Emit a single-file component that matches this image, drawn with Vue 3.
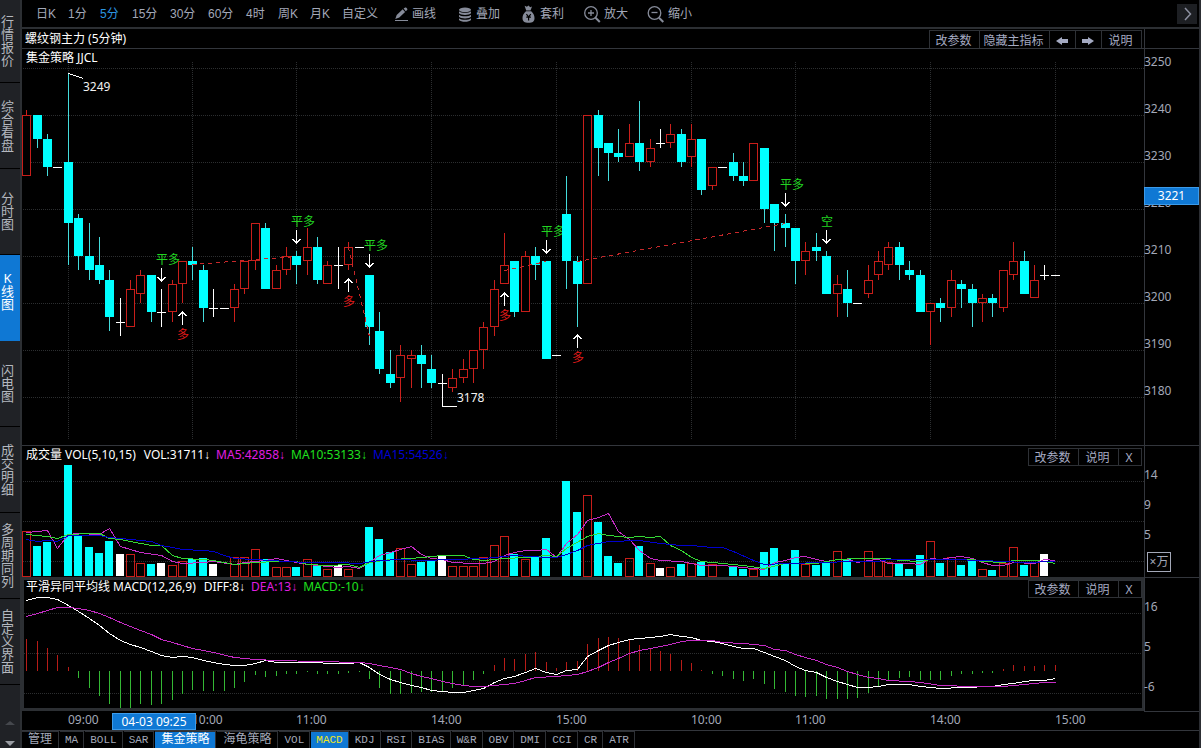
<script setup>
import { computed, onBeforeUnmount, onMounted, ref } from 'vue'

const sideItems = ['行情报价', '综合看盘', '分时图', 'K线图', '闪电图', '成交明细', '多周期同列', '自定义界面']
const periods = ['日K', '1分', '5分', '15分', '30分', '60分', '4时', '周K', '月K', '自定义']
const indicatorTabs = [
  '管理', 'MA', 'BOLL', 'SAR', '集金策略', '海龟策略', 'VOL', 'MACD', 'KDJ', 'RSI',
  'BIAS', 'W&R', 'OBV', 'DMI', 'CCI', 'CR', 'ATR'
]
const activeSide = ref('K线图')
const activePeriod = ref('5分')
const isCjk = (s) => s.charCodeAt(0) > 255

const plotEl = ref(null)
const plotWidth = ref(1122)
let observer
onMounted(() => {
  const measure = () => { plotWidth.value = plotEl.value.clientWidth }
  measure()
  observer = new ResizeObserver(measure)
  observer.observe(plotEl.value)
})
onBeforeUnmount(() => observer && observer.disconnect())

const step = computed(() => (plotWidth.value - 93.5) / 99)
const px = (i) => Math.floor(4.7 + i * step.value)
const py = (p) => Math.round(19 + (3250 - p) * 4.7)

// open, close, high, low
const bars = [
  [3227, 3240, 3241, 3227], [3240, 3235, 3240, 3233], [3235, 3229, 3236, 3227], [3229, 3229, 3229, 3229],
  [3230, 3217, 3249, 3208], [3218, 3210, 3219, 3207], [3210, 3207, 3217, 3205], [3208, 3205, 3214, 3204],
  [3205, 3197, 3207, 3194], [3196, 3196, 3201, 3193], [3195, 3203, 3205, 3195], [3202, 3206, 3207, 3200],
  [3206, 3198, 3206, 3196], [3198, 3198, 3203, 3195], [3198, 3204, 3205, 3196], [3204, 3209, 3209, 3200],
  [3209, 3208, 3212, 3205], [3207, 3199, 3208, 3196], [3199, 3199, 3203, 3197], [3199, 3199, 3199, 3199],
  [3199, 3203, 3204, 3196], [3203, 3209, 3209, 3202], [3209, 3217, 3217, 3207], [3216, 3203, 3217, 3203],
  [3203, 3207, 3208, 3203], [3207, 3210, 3212, 3206], [3210, 3208, 3211, 3204], [3209, 3212, 3216, 3206],
  [3212, 3205, 3214, 3204], [3204, 3208, 3209, 3204], [3208, 3208, 3212, 3203], [3208, 3212, 3213, 3207],
  [3212, 3212, 3212, 3212], [3206, 3195, 3206, 3191], [3194, 3186, 3198, 3185], [3185, 3183, 3190, 3182],
  [3184, 3189, 3191, 3179], [3188, 3189, 3190, 3182], [3189, 3187, 3191, 3182], [3186, 3183, 3189, 3182],
  [3183, 3183, 3185, 3178], [3182, 3184, 3186, 3181], [3184, 3186, 3188, 3183], [3186, 3190, 3190, 3183],
  [3190, 3195, 3196, 3186], [3195, 3203, 3205, 3193], [3204, 3208, 3215, 3204], [3209, 3198, 3209, 3197],
  [3198, 3210, 3211, 3198], [3210, 3208, 3212, 3205], [3209, 3188, 3209, 3188], [3189, 3189, 3189, 3189],
  [3219, 3209, 3227, 3203], [3209, 3204, 3210, 3195], [3204, 3240, 3240, 3204], [3240, 3233, 3241, 3227],
  [3234, 3232, 3234, 3226], [3232, 3231, 3237, 3230], [3231, 3234, 3238, 3231], [3234, 3230, 3243, 3228],
  [3230, 3233, 3235, 3229], [3234, 3234, 3237, 3233], [3234, 3236, 3238, 3233], [3236, 3230, 3237, 3229],
  [3231, 3235, 3238, 3229], [3235, 3224, 3235, 3223], [3225, 3229, 3229, 3224], [3229, 3229, 3229, 3229],
  [3230, 3227, 3232, 3226], [3227, 3226, 3230, 3225], [3226, 3234, 3234, 3226], [3233, 3220, 3233, 3217],
  [3221, 3217, 3221, 3211], [3217, 3216, 3219, 3212], [3216, 3209, 3216, 3204], [3209, 3211, 3213, 3206],
  [3212, 3211, 3215, 3209], [3210, 3202, 3211, 3202], [3202, 3204, 3206, 3197], [3203, 3200, 3207, 3197],
  [3200, 3200, 3200, 3200], [3202, 3205, 3208, 3201], [3206, 3209, 3211, 3205], [3208, 3212, 3213, 3207],
  [3212, 3208, 3213, 3205], [3207, 3206, 3209, 3205], [3206, 3198, 3207, 3198], [3198, 3200, 3200, 3191],
  [3200, 3199, 3201, 3196], [3199, 3205, 3207, 3197], [3204, 3203, 3205, 3199], [3203, 3200, 3204, 3195],
  [3200, 3201, 3202, 3196], [3201, 3200, 3202, 3197], [3199, 3207, 3207, 3198], [3206, 3209, 3213, 3205],
  [3209, 3202, 3211, 3202], [3201, 3205, 3208, 3201], [3206, 3206, 3208, 3205], [3206, 3206, 3206, 3206]
]
const kind = (b) => (b[1] > b[0] ? 'up' : b[1] < b[0] ? 'down' : 'flat')

const candles = computed(() => bars.map((b, i) => {
  const top = py(Math.max(b[0], b[1]))
  const bottom = py(Math.min(b[0], b[1]))
  return { i, kind: kind(b), x: px(i), top, h: bottom - top, bottom, hi: py(b[2]), lo: py(b[3]) }
}))

const volumes = [
  45, 30, 34, 0, 111, 40, 29, 23, 35, 22, 22, 13, 12, 13, 11, 15, 17, 18, 12, 0,
  19, 19, 27, 17, 9, 9, 9, 17, 11, 7, 11, 7, 0, 49, 37, 24, 28, 12, 14, 15,
  20, 10, 10, 10, 19, 31, 40, 22, 17, 19, 38, 0, 95, 64, 81, 54, 20, 13, 18, 30,
  13, 8, 9, 12, 13, 14, 12, 0, 10, 7, 7, 24, 28, 12, 26, 12, 11, 14, 25, 17,
  0, 25, 15, 14, 13, 7, 21, 35, 13, 19, 11, 15, 7, 6, 13, 29, 11, 14, 22, 0
]
const volBars = computed(() => volumes.map((h, i) => ({ i, h, x: px(i), kind: kind(bars[i]) })).filter((v) => v.h))

const macd = [
  32, 30, 23, 16, 4, -7, -17, -25, -33, -37, -37, -33, -34, -33, -29, -23, -19, -20, -20, -20,
  -17, -11, -4, -6, -5, -3, -3, -1, -3, -3, -3, -2, -1, -8, -17, -23, -23, -22, -21, -21,
  -20, -17, -14, -9, -3, 6, 13, 12, 17, 19, 9, 3, 9, 10, 27, 33, 34, 33, 31, 26,
  23, 20, 17, 11, 8, 1, -3, -5, -8, -10, -8, -13, -18, -21, -25, -26, -25, -28, -28, -28,
  -27, -22, -15, -10, -7, -6, -9, -9, -9, -5, -3, -3, -2, -2, 2, 6, 5, 5, 6, 6
]
const macdBars = computed(() => macd.map((v, i) => ({ i, x: px(i), y: v > 0 ? 94 - v : 94, h: Math.abs(v), cls: v > 0 ? 'pos' : 'neg' })))

// [bar index, height on the panel]
const ma5 = [
  [0, 86], [1, 85], [2, 84], [3, 102], [4, 88], [5, 87], [7, 88], [8, 82], [9, 100], [11, 106], [13, 109], [14, 115],
  [15, 117], [17, 116], [18, 115], [20, 118], [21, 116], [23, 114], [24, 112], [26, 116], [27, 118], [30, 121], [31, 120],
  [32, 122], [33, 116], [34, 109], [35, 106], [36, 103], [37, 100], [38, 108], [39, 112], [40, 113], [41, 116], [43, 117],
  [44, 117], [45, 115], [46, 109], [47, 106], [48, 104], [49, 104], [50, 103], [51, 111], [52, 97], [53, 88], [54, 74],
  [55, 71], [56, 67], [57, 85], [58, 93], [59, 104], [60, 112], [61, 114], [63, 115], [65, 119], [67, 119], [70, 122],
  [71, 123], [72, 116], [73, 114], [74, 111], [75, 110], [76, 113], [77, 115], [78, 113], [79, 113], [80, 116], [81, 114],
  [82, 113], [83, 117], [85, 117], [86, 118], [87, 112], [88, 113], [89, 111], [90, 110], [91, 112], [92, 116], [93, 119],
  [94, 119], [95, 116], [97, 117], [98, 113], [99, 114]
]
const ma10 = [
  [0, 88], [2, 90], [3, 92], [4, 88], [6, 87], [7, 87], [8, 92], [9, 93], [10, 95], [12, 99], [13, 99], [14, 109], [15, 112],
  [17, 113], [18, 114], [20, 118], [22, 116], [24, 115], [26, 115], [27, 118], [29, 119], [31, 118], [32, 121], [33, 116],
  [35, 113], [37, 112], [38, 111], [40, 109], [42, 109], [43, 113], [44, 114], [46, 112], [48, 111], [50, 109], [51, 110],
  [52, 102], [54, 90], [55, 87], [56, 89], [58, 91], [59, 90], [60, 91], [61, 90], [62, 99], [63, 104], [64, 111], [65, 115],
  [66, 116], [67, 117], [69, 119], [71, 122], [73, 117], [76, 117], [78, 113], [80, 112], [83, 112], [84, 114], [86, 115],
  [87, 113], [91, 113], [92, 115], [94, 116], [95, 114], [97, 114], [98, 115], [99, 117]
]
const ma15 = [
  [0, 93], [1, 95], [2, 94], [3, 95], [4, 89], [7, 89], [8, 91], [9, 92], [12, 95], [13, 99], [14, 101], [15, 103], [17, 104],
  [18, 105], [19, 109], [20, 112], [22, 113], [25, 115], [27, 116], [30, 116], [32, 117], [34, 114], [36, 113], [38, 114],
  [41, 113], [44, 112], [46, 110], [47, 109], [50, 111], [51, 111], [52, 108], [53, 104], [54, 99], [56, 95], [59, 94],
  [61, 97], [63, 99], [64, 99], [66, 101], [67, 101], [68, 105], [70, 114], [71, 118], [73, 117], [77, 116], [79, 115],
  [82, 115], [83, 113], [89, 113], [92, 114], [96, 116], [99, 115]
]
const diff = [
  [0, 23], [1, 20], [2, 20], [3, 22], [4, 28], [5, 34], [6, 41], [7, 48], [8, 56], [9, 63], [10, 67], [11, 70], [12, 74],
  [13, 78], [14, 80], [15, 79], [16, 80], [17, 83], [18, 85], [19, 87], [20, 88], [21, 88], [22, 86], [23, 83], [24, 85],
  [28, 85], [29, 86], [31, 86], [32, 85], [33, 90], [34, 97], [35, 102], [36, 105], [37, 108], [38, 110], [39, 113],
  [40, 114], [41, 115], [42, 115], [43, 113], [44, 111], [45, 105], [46, 101], [47, 99], [48, 95], [49, 91], [50, 95],
  [51, 97], [52, 93], [53, 92], [54, 79], [55, 73], [56, 68], [57, 65], [58, 62], [59, 61], [60, 60], [61, 59], [62, 57],
  [63, 59], [64, 60], [65, 63], [66, 64], [67, 66], [68, 69], [69, 71], [70, 71], [71, 75], [72, 79], [73, 83], [74, 89],
  [75, 93], [76, 95], [77, 100], [78, 104], [79, 107], [80, 110], [81, 110], [82, 109], [83, 107], [85, 107], [86, 109],
  [88, 111], [90, 110], [91, 110], [92, 109], [93, 109], [94, 107], [95, 106], [96, 104], [97, 103], [98, 103], [99, 101]
]
const dea = [
  [0, 39], [1, 36], [2, 33], [3, 30], [4, 30], [5, 31], [6, 33], [7, 36], [8, 40], [9, 45], [10, 49], [11, 53], [12, 57],
  [13, 62], [14, 65], [15, 68], [16, 71], [17, 73], [18, 75], [20, 80], [21, 81], [22, 82], [24, 83], [28, 84], [32, 85],
  [33, 86], [34, 88], [35, 90], [36, 92], [37, 96], [38, 99], [39, 101], [40, 104], [41, 106], [42, 108], [43, 109],
  [44, 109], [46, 107], [47, 106], [48, 103], [49, 100], [51, 99], [52, 98], [53, 97], [54, 94], [55, 90], [56, 85],
  [57, 81], [58, 76], [59, 73], [60, 71], [61, 69], [62, 67], [63, 64], [64, 63], [66, 63], [67, 65], [69, 66], [70, 67],
  [71, 68], [72, 72], [73, 73], [74, 77], [75, 80], [76, 83], [77, 87], [78, 90], [79, 94], [80, 97], [81, 100], [82, 101],
  [83, 103], [85, 104], [86, 105], [88, 108], [91, 109], [94, 109], [95, 108], [97, 106], [98, 105], [99, 105]
]
const poly = (pts) => pts.map(([i, y]) => `${px(i) + 0.5},${y + 0.5}`).join(' ')

const timeMarks = [
  { i: 4, t: '09:00' }, { i: 16, t: '10:00' }, { i: 26, t: '11:00' }, { i: 39, t: '14:00' }, { i: 51, t: '15:00' },
  { i: 64, t: '10:00' }, { i: 74, t: '11:00' }, { i: 87, t: '14:00' }, { i: 99, t: '15:00' }
]
const prices = [3250, 3240, 3230, 3220, 3210, 3200, 3190, 3180]
const volLabels = [{ t: '14', y: 29 }, { t: '9', y: 59 }, { t: '5', y: 89 }]
const macdLabels = [{ t: '16', y: 30 }, { t: '5', y: 70 }, { t: '-6', y: 110 }]

const sells = [
  { i: 13, y: 219, t: '平多' }, { i: 26, y: 181, t: '平多' }, { i: 33, y: 205, t: '平多' },
  { i: 50, y: 191, t: '平多' }, { i: 73, y: 144, t: '平多' }, { i: 77, y: 181, t: '空' }
]
const buys = [{ i: 15, y: 262 }, { i: 31, y: 229 }, { i: 46, y: 243 }, { i: 53, y: 285 }]
const trades = [
  { a: 16, ya: 215, b: 26, yb: 207 }, { a: 31, ya: 198, b: 33, yb: 287 },
  { a: 46, ya: 221, b: 50, yb: 212 }, { a: 53, ya: 212, b: 73, yb: 174 }
]
</script>

<template>
  <div class="app">
    <nav class="side" aria-label="视图">
      <button
        v-for="s in sideItems" :key="s" type="button"
        :class="['side-item', { active: s === activeSide }]" @click="activeSide = s"
      ><span>{{ s }}</span></button>
      <div class="side-scroll">
        <button type="button" aria-label="向上"><svg width="10" height="4"><path d="M0 4L5 0L10 4Z" fill="#45484d" /></svg></button>
        <button type="button" aria-label="向下"><svg width="10" height="5"><path d="M0 0L5 5L10 0Z" fill="#9a9da3" /></svg></button>
      </div>
    </nav>

    <main class="main">
      <header class="toolbar">
        <button
          v-for="p in periods" :key="p" type="button"
          :class="['period', { wide: p.length === 3, active: p === activePeriod }]" @click="activePeriod = p"
        >{{ p }}</button>
        <button type="button" class="tool">
          <svg width="20" height="20" viewBox="0 0 20 20"><path d="M12.6 4.4l1.6-.9a1 1 0 0 1 1.2.3l.8 1a1 1 0 0 1-.1 1.3l-1.3 1.2zM11.700 5.200l2.400 2.800-5.800 5.400-4 1.600 1.400-4z" fill="#868b99" /><path d="M4 16.500H17" stroke="#868b99" /></svg>画线
        </button>
        <button type="button" class="tool">
          <svg width="20" height="20" viewBox="0 0 20 20" fill="#868b99"><ellipse cx="10" cy="5.800" rx="6" ry="2.300" /><path d="M4 7.300c2 2 10 2 12 0v2c-2 2.200-10 2.200-12 0zM4 10.800c2 2 10 2 12 0v2c-2 2.200-10 2.200-12 0zM4 14.300c2 2 10 2 12 0v1.600c-2 2.400-10 2.400-12 0z" /></svg>叠加
        </button>
        <button type="button" class="tool">
          <svg width="20" height="20" viewBox="0 0 20 20"><path d="M5.600 1.800l2.300 1 1.600-1.200 1.700 1.600 1.800-.6-1.500 4h-4.300zM7 7.300h5.200c2 1.800 3.300 4 3.300 6.600c0 3.300-1.800 4.900-5.900 4.900s-6.100-1.600-6.100-4.900c0-2.600 1.400-4.800 3.500-6.600z" fill="#868b99" /><path d="M7.400 10.200l2.200 2.600 2.200-2.600M7.300 13.200h4.600M9.600 12.800v3.600" fill="none" stroke="#000" stroke-width="1.200" /></svg>套利
        </button>
        <button type="button" class="tool">
          <svg width="20" height="20" viewBox="0 0 20 20" fill="none" stroke="#868b99" stroke-width="1.300"><circle cx="8" cy="9" r="6.300" /><path d="M5 9h6M8 6v6" /><path d="M12.500 13.700l4.300 4.300" stroke-width="2" /></svg>放大
        </button>
        <button type="button" class="tool">
          <svg width="20" height="20" viewBox="0 0 20 20" fill="none" stroke="#868b99" stroke-width="1.300"><circle cx="7.500" cy="9" r="6.300" /><path d="M4.500 8.500h6" /><path d="M12 13.700l4.300 4.300" stroke-width="2" /></svg>缩小
        </button>
        <button type="button" class="more" aria-label="更多">
          <svg width="20" height="20"><path d="M8 4l5.500 6L8 16" fill="none" stroke="#8c90a0" stroke-width="1.500" /></svg>
        </button>
      </header>

      <div class="row title-row">
        <div class="title">
          <h1>螺纹钢主力 (5分钟)</h1>
          <div class="actions">
            <button type="button" class="w50">改参数</button>
            <button type="button" class="w70">隐藏主指标</button>
            <button type="button" class="w26" aria-label="上一个"><svg width="12" height="8"><path d="M0 4L6 0V2H12V6H6V8Z" fill="#a4aac2" /></svg></button>
            <button type="button" class="w26" aria-label="下一个"><svg width="12" height="8"><path d="M12 4L6 0V2H0V6H6V8Z" fill="#a4aac2" /></svg></button>
            <button type="button" class="w40">说明</button>
          </div>
        </div>
        <div class="axis"></div>
      </div>

      <section class="row price-row">
        <div ref="plotEl" class="plot">
          <svg class="chart" width="100%" height="396">
            <g class="grid">
              <line v-for="p in prices" :key="p" x1="1" x2="100%" :y1="py(p) + 0.5" :y2="py(p) + 0.5" />
              <line v-for="m in timeMarks" :key="m.i" :x1="px(m.i) + 0.5" :x2="px(m.i) + 0.5" y1="13" y2="391" />
            </g>
            <g v-for="s in sells" :key="'s' + s.i">
              <text class="sell" :x="px(s.i) - 5" :y="s.y - 4">{{ s.t }}</text>
              <path class="arrow" :d="`M${px(s.i) + 0.5} ${s.y}v13m-4 -4l4 4l4 -4`" />
            </g>
            <g v-for="b in buys" :key="'b' + b.i">
              <text class="buy" :x="px(b.i) - 5" :y="b.y + 28">多</text>
              <path class="arrow" :d="`M${px(b.i) + 0.5} ${b.y + 14}v-13m-4 4l4 -4l4 4`" />
            </g>
            <g v-for="c in candles" :key="c.i" :class="c.kind">
              <template v-if="c.kind === 'flat'">
                <rect :x="c.x - 4" :y="c.top" width="9" height="1" />
                <rect v-if="c.lo > c.hi" :x="c.x" :y="c.hi" width="1" :height="c.lo - c.hi" />
              </template>
              <template v-else-if="c.kind === 'down'">
                <rect class="wick" :x="c.x" :y="c.hi" width="1" :height="c.lo - c.hi" />
                <rect :x="c.x - 4" :y="c.top" width="9" :height="c.h" />
              </template>
              <template v-else>
                <rect class="wick" :x="c.x" :y="c.hi" width="1" :height="c.top - c.hi" />
                <rect class="wick" :x="c.x" :y="c.bottom" width="1" :height="c.lo - c.bottom" />
                <rect class="hollow" :x="c.x - 3.5" :y="c.top + 0.5" width="8" :height="c.h - 1" />
              </template>
            </g>
            <line
              v-for="t in trades" :key="'t' + t.a" class="trade"
              :x1="px(t.a) + 0.5" :y1="t.ya + 0.5" :x2="px(t.b) + 0.5" :y2="t.yb + 0.5"
            />
            <path class="callout" :d="`M${px(4) + 0.5} 24.5l15 5`" />
            <text class="note" :x="px(4) + 15" y="42">3249</text>
            <path class="callout" :d="`M${px(40) + 0.5} 350v7.500h14`" />
            <text class="note" :x="px(40) + 15" y="353">3178</text>
          </svg>
          <div class="legend"><span>集金策略 JJCL</span></div>
        </div>
        <div class="axis">
          <span v-for="p in prices" :key="p" class="tick" :style="{ top: py(p) - 14 + 'px' }">{{ p }}</span>
          <span class="price-tag">3221</span>
        </div>
      </section>

      <section class="row vol-row">
        <div class="plot">
          <svg class="chart" width="100%" height="131">
            <g class="grid"><line v-for="y in [35, 75, 115]" :key="y" x1="1" x2="100%" :y1="y + 0.5" :y2="y + 0.5" /></g>
            <g v-for="v in volBars" :key="v.i" :class="v.kind">
              <rect v-if="v.kind === 'up'" class="hollow" :x="v.x - 3.5" :y="130.5 - v.h" width="8" :height="v.h" />
              <rect v-else :x="v.x - 4" :y="130 - v.h" width="8" :height="v.h" />
            </g>
            <polyline class="line magenta" :points="poly(ma5)" />
            <polyline class="line green" :points="poly(ma10)" />
            <polyline class="line blue" :points="poly(ma15)" />
          </svg>
          <div class="legend">
            <span class="name">成交量 VOL(5,10,15)</span>
            <span>VOL:31711<i>↓</i></span>
            <span class="t-magenta">MA5:42858<i>↓</i></span>
            <span class="t-green">MA10:53133<i>↓</i></span>
            <span class="t-blue">MA15:54526<i>↓</i></span>
          </div>
          <div class="actions floating">
            <button type="button" class="w50">改参数</button>
            <button type="button" class="w40">说明</button>
            <button type="button" class="w23">X</button>
          </div>
        </div>
        <div class="axis">
          <span v-for="l in volLabels" :key="l.t" class="tick" :style="{ top: l.y - 8 + 'px' }">{{ l.t }}</span>
          <span class="unit">×万</span>
        </div>
      </section>

      <section class="row macd-row">
        <div class="plot selected">
          <svg class="chart" width="100%" height="134">
            <g class="grid"><line v-for="y in [36, 76, 116]" :key="y" x1="2" x2="100%" :y1="y + 0.5" :y2="y + 0.5" /></g>
            <rect v-for="m in macdBars" :key="m.i" :class="m.cls" :x="m.x" :y="m.y" width="1" :height="m.h" />
            <polyline class="line white" :points="poly(diff)" />
            <polyline class="line magenta" :points="poly(dea)" />
          </svg>
          <div class="legend">
            <span class="name">平滑异同平均线 MACD(12,26,9)</span>
            <span>DIFF:8<i>↓</i></span>
            <span class="t-magenta">DEA:13<i>↓</i></span>
            <span class="t-green">MACD:-10<i>↓</i></span>
          </div>
          <div class="actions floating">
            <button type="button" class="w50">改参数</button>
            <button type="button" class="w40">说明</button>
            <button type="button" class="w23">X</button>
          </div>
        </div>
        <div class="axis">
          <span v-for="l in macdLabels" :key="l.t" class="tick" :style="{ top: l.y - 9 + 'px' }">{{ l.t }}</span>
        </div>
      </section>

      <div class="time-row">
        <span v-for="m in timeMarks" :key="m.i" class="time" :style="{ left: px(m.i) + 'px' }">{{ m.t }}</span>
        <span class="time-tag" :style="{ left: px(4) + 44 + 'px' }">04-03 09:25</span>
        <div class="time-corner"></div>
      </div>

      <nav class="tabs" aria-label="指标">
        <button
          v-for="t in indicatorTabs" :key="t" type="button"
          :class="['tab', { cjk: isCjk(t), picked: t === '集金策略', current: t === 'MACD' }]"
        >{{ t }}</button>
      </nav>
    </main>
  </div>
</template>

<style>
body {
  background: #000;
}
</style>

<style scoped>
.app {
  display: flex;
  min-height: 100vh;
  box-sizing: border-box;
  border-right: 2px solid #2c2e33;
  background: #000;
  color: #a3a8b8;
  font: 12px/16px "Noto Sans", "Noto Sans CJK SC", sans-serif;
}
button {
  margin: 0;
  padding: 0;
  border: 0;
  border-radius: 0;
  background: none;
  color: inherit;
  font: inherit;
  box-sizing: border-box;
  cursor: pointer;
}
svg {
  display: block;
}

.side {
  flex: none;
  width: 22px;
  box-sizing: border-box;
  border-right: 2px solid #2c2f33;
  background: #202226;
  display: flex;
  flex-direction: column;
}
.side-item {
  height: 86px;
  width: 20px;
  padding-left: 1px;
  display: flex;
  align-items: center;
  border-bottom: 1px solid #000;
  color: #b4b8bf;
  font-size: 13px;
  line-height: 13px;
}
.side-item:first-child {
  height: 83px;
}
.side-item span {
  width: 13px;
  text-align: center;
  word-break: break-all;
}
.side-item.active {
  padding-bottom: 12px;
  border-bottom-color: #0f78d4;
  background: #0f78d4;
  color: #fff;
}
.side-scroll {
  margin-top: auto;
  height: 30px;
  padding-left: 5px;
  display: flex;
  flex-direction: column;
  justify-content: space-between;
}
.side-scroll button {
  width: 10px;
  height: 10px;
}

.main {
  flex: 1;
  min-width: 0;
  display: flex;
  flex-direction: column;
}
.toolbar {
  height: 29px;
  box-sizing: border-box;
  border-bottom: 2px solid #2c2f33;
  display: flex;
  align-items: center;
  padding: 0 2px 0 14px;
  font-family: "Liberation Sans", "Noto Sans CJK SC", sans-serif;
  white-space: nowrap;
}
.period {
  width: 32px;
  text-align: left;
}
.period.wide {
  width: 38px;
}
.period:nth-child(10) {
  width: 49px;
}
.period.active {
  color: #2c95e0;
}
.tool {
  width: 64px;
  display: flex;
  align-items: center;
  gap: 1px;
}
.more {
  margin-left: auto;
  width: 20px;
  height: 20px;
  background: #1d1f23;
}

.row {
  display: flex;
}
.axis {
  position: relative;
  flex: none;
  width: 55px;
  box-sizing: border-box;
  border-left: 1px solid #33363c;
}
.title-row {
  height: 20px;
  box-sizing: border-box;
  border-bottom: 1px solid #33363c;
}
.title {
  flex: 1;
  display: flex;
  justify-content: space-between;
  align-items: flex-end;
  padding: 0 2px 0 3px;
}
h1 {
  margin: 0;
  color: #fff;
  font-size: 12px;
  font-weight: 400;
  line-height: 18px;
}
.actions {
  display: flex;
  height: 18px;
  border-left: 1px solid #2e3136;
  color: #a4aac2;
}
.actions button {
  display: flex;
  align-items: center;
  justify-content: center;
  padding: 2px 2px 0 0;
  border: 1px solid #2e3136;
  border-left: 0;
  background: #000;
  white-space: nowrap;
  line-height: 14px;
}
.title .actions button {
  border-bottom: 0;
}
.w50 { width: 50px; }
.w70 { width: 70px; }
.w40 { width: 40px; }
.w26 { width: 26px; }
.w23 { width: 23px; }
.actions.floating {
  position: absolute;
  right: 2px;
  top: 2px;
}

.plot {
  position: relative;
  flex: 1;
  min-width: 0;
}
.price-row {
  border-bottom: 1px solid #33363c;
}
.selected::after {
  content: "";
  position: absolute;
  inset: 0;
  border: solid #2c2f33;
  border-width: 3px 2px 3px 2px;
  pointer-events: none;
}
.macd-row .axis {
  border-top: 1px solid #33363c;
}
.legend {
  position: absolute;
  left: 4px;
  top: 1px;
  display: flex;
  gap: 6px;
  color: #fff;
  white-space: nowrap;
}
.legend .name {
  margin-right: 2px;
}
.legend i {
  font-family: "Liberation Sans", sans-serif;
  font-style: normal;
}
.macd-row .legend {
  top: 2px;
}
.macd-row .actions.floating {
  top: 3px;
}
.t-magenta { color: #e01ee0; }
.t-green { color: #1fe01f; }
.t-blue { color: #0000d4; }

.chart {
  shape-rendering: crispEdges;
}
.grid line {
  stroke: #2c2e30;
  stroke-dasharray: 1 1;
}
.down { fill: #00ffff; }
.down .wick { fill: #44dcdc; }
.up { fill: #cc201c; }
.hollow {
  fill: #000;
  stroke: #c81e1a;
}
.vol-row .hollow { fill: none; }
.flat { fill: #fff; }
.trade {
  stroke: #c8282a;
  stroke-dasharray: 4 4;
}
.arrow,
.callout {
  fill: none;
  stroke: #fff;
}
.sell { fill: #22d422; }
.buy { fill: #e01a1a; }
.note { fill: #f2f2f2; }
.line { fill: none; }
.magenta { stroke: #c62cc6; }
.green { stroke: #35d835; }
.blue { stroke: #0000cd; }
.white { stroke: #fff; }
.pos { fill: #b81c18; }
.neg { fill: #34b834; }

.tick {
  position: absolute;
  left: -1px;
}
.price-tag {
  position: absolute;
  left: -1px;
  right: 0;
  top: 138px;
  height: 18px;
  box-sizing: border-box;
  border: 1px solid #3c9bea;
  background: #0f78d4;
  color: #fff;
  text-align: center;
}
.unit {
  position: absolute;
  left: 2px;
  top: 106px;
  width: 24px;
  height: 20px;
  box-sizing: border-box;
  border: 1px solid #a3a8b8;
  line-height: 18px;
  text-align: center;
}
.time-row {
  position: relative;
  height: 20px;
  box-sizing: border-box;
  border-bottom: 1px solid #33363c;
  display: flex;
  justify-content: flex-end;
}
.time-corner {
  width: 55px;
  border-top: 1px solid #33363c;
}
.time {
  position: absolute;
  top: 1px;
}
.time-tag {
  position: absolute;
  top: 2px;
  width: 84px;
  height: 17px;
  box-sizing: border-box;
  border: 1px solid #3c9bea;
  background: #0f78d4;
  color: #fff;
  text-align: center;
}
.tabs {
  display: flex;
  gap: 1px;
  height: 17px;
  overflow: hidden;
}
.tab {
  padding: 0 5px;
  border: solid #2e3136;
  border-width: 1px 1px 0 0;
  font: 11px/16px "Liberation Mono", "Noto Sans CJK SC", monospace;
}
.tab.cjk {
  padding: 0 6px;
  font-size: 12px;
}
.tab.picked {
  background: #0f78d4;
  color: #fff;
}
.tab.current {
  background: #0f78d4;
  color: #f0e61e;
}
</style>
